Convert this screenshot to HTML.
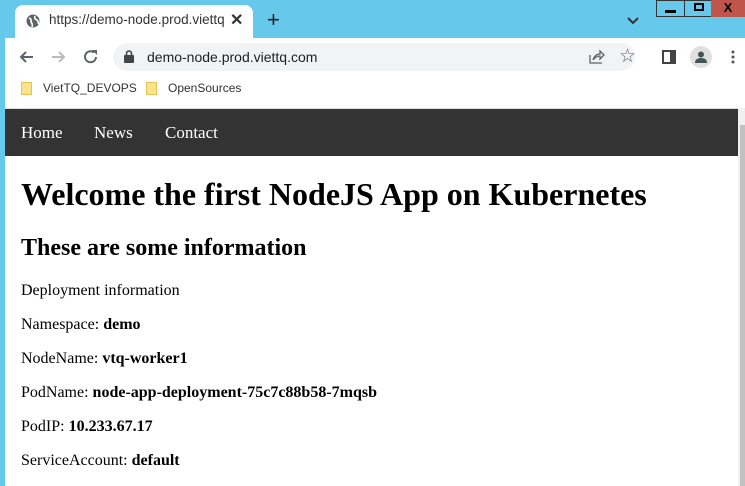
<!DOCTYPE html>
<html><head><style>
*{margin:0;padding:0;box-sizing:border-box}
body{width:745px;height:486px;overflow:hidden;background:#66c8ea;position:relative;font-family:"Liberation Sans",sans-serif}
.abs{position:absolute}
.tab{left:15px;top:5px;width:238px;height:34px;background:#fff;border-radius:8px 8px 0 0}
.toolbar{left:5px;top:38px;width:740px;height:70px;background:#fff}
.omni{left:113px;top:43px;width:522px;height:28px;background:#f1f3f4;border-radius:14px}
.page{left:5px;top:108px;width:733px;height:378px;background:#fff;border-top:1px solid #ddd}
.nav{left:5px;top:109px;width:733px;height:47px;background:#333}
.nav span{position:absolute;top:14px;color:#fff;font:17px "Liberation Serif",serif}
.serif{font-family:"Liberation Serif",serif;color:#000}
.p{position:absolute;left:21px;font:16px "Liberation Serif",serif;color:#000}
.p b{font-weight:bold}
</style></head><body>
<div class="abs tab"></div>
<svg class="abs" style="left:26px;top:14px" width="14" height="14" viewBox="0 0 14 14"><circle cx="7" cy="7" r="6.5" fill="#5f6368"/><path d="M3 4 Q6 5 5 8 Q7 10 6 13 M9 2 Q8 5 11 6 Q13 8 12 10" stroke="#fff" stroke-width="1.6" fill="none"/></svg>
<div class="abs" style="left:49px;top:12px;font-size:13.5px;color:#333;width:176px;overflow:hidden;white-space:nowrap">https://demo-node.prod.viettq.co</div>
<div class="abs" style="left:230px;top:10px;font-size:16px;color:#333;font-weight:bold">✕</div>
<div class="abs" style="left:267px;top:7px;font-size:22px;color:#222">+</div>
<svg class="abs" style="left:627px;top:17px" width="12" height="8"><path d="M1 1 L6 6 L11 1" stroke="#333" stroke-width="2" fill="none"/></svg>
<div class="abs" style="left:656px;top:0;width:29px;height:17px;border:1px solid #333;background:#66c8ea"><div style="position:absolute;left:8px;top:9px;width:11px;height:3px;background:#000"></div></div>
<div class="abs" style="left:684px;top:0;width:28px;height:17px;border:1px solid #333;background:#66c8ea"><div style="position:absolute;left:9px;top:2px;width:10px;height:8px;border:2px solid #000"></div></div>
<div class="abs" style="left:711px;top:0;width:34px;height:17px;background:#c0564b;color:#000;font-weight:bold;font-size:13px;text-align:center;line-height:15px">X</div>
<div class="abs toolbar"></div>
<svg class="abs" style="left:18px;top:49px" width="16" height="16"><path d="M15 8 H3 M8 3 L3 8 L8 13" stroke="#5f6368" stroke-width="2" fill="none"/></svg>
<svg class="abs" style="left:51px;top:49px" width="16" height="16"><path d="M1 8 H13 M8 3 L13 8 L8 13" stroke="#bbb" stroke-width="2" fill="none"/></svg>
<svg class="abs" style="left:83px;top:49px" width="16" height="16"><path d="M13 8 A5.5 5.5 0 1 1 11 3.5" stroke="#5f6368" stroke-width="2" fill="none"/><path d="M9 1 H14 V6 Z" fill="#5f6368"/></svg>
<div class="abs omni"></div>
<svg class="abs" style="left:124px;top:50px" width="10" height="13"><rect x="0" y="5" width="10" height="8" rx="1" fill="#444"/><path d="M2.5 6 V3.5 A2.5 2.5 0 0 1 7.5 3.5 V6" stroke="#444" stroke-width="1.6" fill="none"/></svg>
<div class="abs" style="left:147px;top:49px;font-size:14px;color:#202124">demo-node.prod.viettq.com</div>
<svg class="abs" style="left:589px;top:49px" width="16" height="16"><path d="M1 6 V14 H13 M4 11 Q6 5 11 5 V2 L15 6 L11 10 V7 Q7 7 4 11" stroke="#5f6368" stroke-width="1.3" fill="none"/></svg>
<div class="abs" style="left:619px;top:45px;font-size:19px;color:#5f6368">☆</div>
<div class="abs" style="left:662px;top:50px;width:14px;height:14px;border:2px solid #444;border-right-width:6px"></div>
<div class="abs" style="left:690px;top:46px;width:22px;height:22px;border-radius:50%;background:#e0e0e0"></div>
<svg class="abs" style="left:694px;top:50px" width="14" height="14"><circle cx="7" cy="4.5" r="3" fill="#455"/><path d="M1 13 Q1 8 7 8 Q13 8 13 13 Z" fill="#455"/></svg>
<svg class="abs" style="left:731px;top:50px" width="4" height="14"><circle cx="2" cy="2" r="1.5" fill="#555"/><circle cx="2" cy="7" r="1.5" fill="#555"/><circle cx="2" cy="12" r="1.5" fill="#555"/></svg>
<div class="abs" style="left:21px;top:82px;width:11px;height:13px;background:#fbe38a;border:1px solid #e2c25a"></div>
<div class="abs" style="left:43px;top:81px;font-size:12px;color:#333">VietTQ_DEVOPS</div>
<div class="abs" style="left:146px;top:82px;width:11px;height:13px;background:#fbe38a;border:1px solid #e2c25a"></div>
<div class="abs" style="left:168px;top:81px;font-size:12px;color:#333">OpenSources</div>
<div class="abs page"></div>
<div class="abs" style="left:738px;top:108px;width:7px;height:378px;background:#f0f0f0"></div>
<div class="abs" style="left:740px;top:125px;width:5px;height:361px;background:#c1c1c1"></div>
<div class="abs nav"><span style="left:16px">Home</span><span style="left:89px">News</span><span style="left:160px">Contact</span></div>
<div class="abs serif" style="left:21px;top:176px;font-size:32px;font-weight:bold;white-space:nowrap">Welcome the first NodeJS App on Kubernetes</div>
<div class="abs serif" style="left:21px;top:235px;font-size:24px;font-weight:bold;white-space:nowrap">These are some information</div>
<div class="p" style="top:282px">Deployment information</div>
<div class="p" style="top:316px">Namespace: <b>demo</b></div>
<div class="p" style="top:350px">NodeName: <b>vtq-worker1</b></div>
<div class="p" style="top:384px">PodName: <b>node-app-deployment-75c7c88b58-7mqsb</b></div>
<div class="p" style="top:418px">PodIP: <b>10.233.67.17</b></div>
<div class="p" style="top:452px">ServiceAccount: <b>default</b></div>
</body></html>
